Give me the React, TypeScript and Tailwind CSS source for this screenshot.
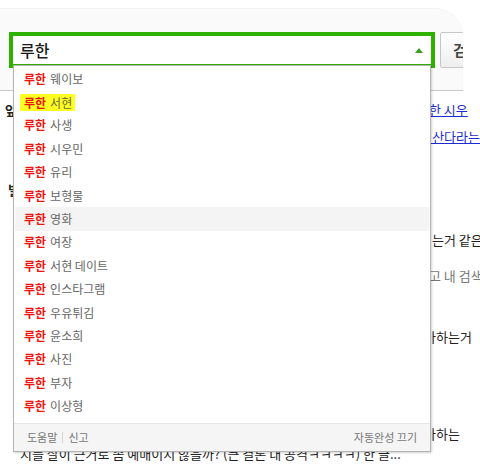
import React from "react";

const items = [
  "웨이보",
  "서현",
  "사생",
  "시우민",
  "유리",
  "보형물",
  "영화",
  "여장",
  "서현 데이트",
  "인스타그램",
  "우유튀김",
  "윤소희",
  "사진",
  "부자",
  "이상형",
];

const font = { fontFamily: '"Noto Sans CJK KR", "Noto Sans", sans-serif' };

export default function App() {
  return (
    <div
      className="relative w-[480px] h-[468px] overflow-hidden bg-white"
      style={font}
    >
      {/* header */}
      <div className="pt-[8px] w-[463px] overflow-hidden">
        <div className="h-[83px] bg-[#fafafa] border-t border-[#f3f3f3] rounded-tr-[28px] border-b border-b-[#c9c9c9] overflow-hidden">
          <div className="mt-[23px] flex items-start">
            <div className="ml-[9px] w-[426px] h-[36px] border-[4px] border-[#2fb100] bg-white flex items-center pl-[7px] pr-[8px] shrink-0">
              <span className="flex-1 text-[16px] leading-none text-[#1a1a1a] font-medium">
                루한
              </span>
              <svg width="8" height="5" viewBox="0 0 8 5">
                <path d="M4 0 L8 5 L0 5 Z" fill="#3a9e1e" />
              </svg>
            </div>
            <div className="ml-[5px] w-[44px] h-[36px] shrink-0 border border-[#c6c6c6] rounded-[2px] bg-gradient-to-b from-white to-[#eeeeee] flex items-center pl-[12px] text-[15px] font-bold text-[#444]">
              검
            </div>
          </div>
        </div>
      </div>

      {/* page content behind dropdown */}
      <div className="text-[13px] text-[#222]">
        <div className="mt-[9px] h-[20px] flex items-center">
          <span className="w-[429px] pl-[5px] font-bold">앞</span>
          <span className="text-[#1d2bd0] underline whitespace-nowrap">한 시우</span>
        </div>
        <div className="mt-[7px] h-[20px] flex items-center">
          <span className="w-[430px]"></span>
          <span className="text-[#1d2bd0] underline whitespace-nowrap">&nbsp;산다라는</span>
        </div>
        <div className="mt-[33px] h-[20px] flex items-center">
          <span className="w-[428px] pl-[8px] font-bold">별</span>
        </div>
        <div className="mt-[30px] h-[20px] flex items-center text-[13px]">
          <span className="w-[432px] shrink-0"></span>
          <span className="whitespace-nowrap">는거 같은</span>
        </div>
        <div className="mt-[16px] h-[20px] flex items-center text-[13px] text-[#777]">
          <span className="w-[429px] shrink-0"></span>
          <span className="whitespace-nowrap">고 내 검색</span>
        </div>
        <div className="mt-[41px] h-[20px] flex items-center text-[13px]">
          <span className="w-[424px] shrink-0"></span>
          <span className="whitespace-nowrap">아하는거</span>
        </div>
        <div className="mt-[77px] h-[20px] flex items-center text-[13px]">
          <span className="w-[424px] shrink-0"></span>
          <span className="whitespace-nowrap">아하는</span>
        </div>
        <div className="h-[20px] flex items-center pl-[20px] text-[13px] whitespace-nowrap">
          지를 살이 근거로 좀 예매이지 않을까? (큰 결론 내 공격ㅋㅋㅋㅋ) 한 글...
        </div>
        <div className="h-[10px] pl-[20px] text-[12px] text-[#2b9a3a] whitespace-nowrap leading-[18px]">
          blog.naver.com · 2015.08.12
        </div>
      </div>

      {/* autocomplete dropdown */}
      <div className="absolute left-[13px] top-[65px] w-[418px] bg-white border border-[#b4b4b4] shadow-[1px_1px_2px_rgba(0,0,0,0.18)] z-10 pt-px">
        <ul className="text-[12px]">
          {items.map((t, i) => (
            <li
              key={t}
              className={
                "mx-px h-[23.4px] flex items-center pl-[9px] whitespace-nowrap " +
                (i === 6 ? "bg-[#f4f4f4]" : "")
              }
            >
              {i === 1 ? (
                <span className="bg-[#ffff22] -ml-[4px] pl-[4px] pr-[3px] leading-[17px] flex items-center">
                  <b className="text-[#f0140f] font-bold">루한</b>
                  <span className="ml-[4px] text-[#6a6a3a]">{t}</span>
                </span>
              ) : (
                <>
                  <b className="text-[#f0140f] font-bold">루한</b>
                  <span className="ml-[4px] text-[#666]">{t}</span>
                </>
              )}
            </li>
          ))}
        </ul>
        <div className="mt-[5px] h-[28px] bg-[#f5f5f5] border-t border-[#e6e6e6] flex items-center justify-between px-[13px] text-[11px] text-[#777]">
          <div className="flex items-center">
            <span>도움말</span>
            <span className="mx-[5px] w-px h-[11px] bg-[#d5d5d5]"></span>
            <span>신고</span>
          </div>
          <span>자동완성 끄기</span>
        </div>
      </div>
    </div>
  );
}
